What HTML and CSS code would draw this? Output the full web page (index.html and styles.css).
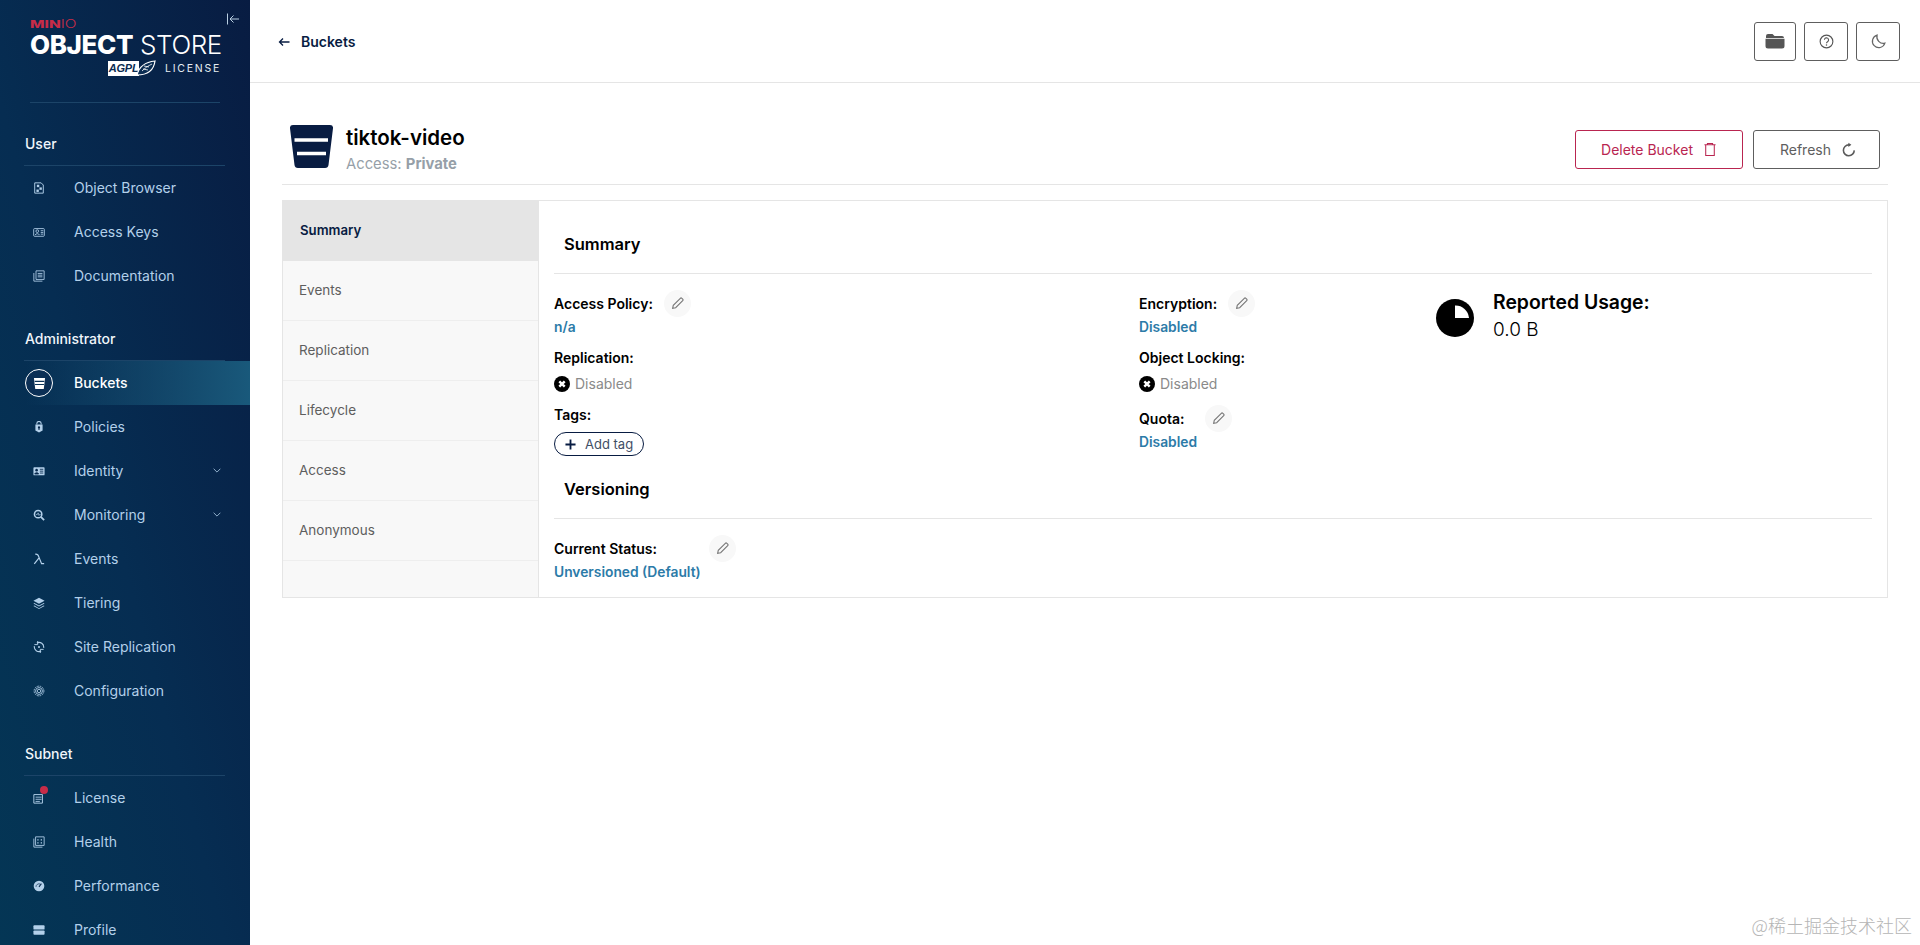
FILE: index.html
```html
<!DOCTYPE html>
<html lang="en">
<head>
<meta charset="utf-8">
<title>MinIO Object Store</title>
<link rel="stylesheet" href="styles.css">
</head>
<body>
<div class="app">
  <aside class="sidebar">
    <div class="logo-area">
      <button class="collapse" aria-label="Collapse"><svg viewBox="0 0 14 14" width="14" height="14"><path d="M1.5 1.5v11M13 7H4M7.5 3.500 4 7l3.500 3.500" fill="none" stroke="#b9cfe2" stroke-width="1"/></svg></button>
      <div class="logo">
        <div class="logo-minio"><b>MIN</b><span>IO</span></div>
        <div class="logo-name"><b>OBJECT</b> <span>STORE</span></div>
        <div class="logo-license">
          <div class="agpl">
            <span class="agpl-text">AGPL</span>
            <svg class="agpl-wing" viewBox="0 0 20 16" width="20" height="16"><path d="M1 15C3 7 9 2 19 1c-1 8-6 14-18 14z" fill="#0a2c52" stroke="#fff" stroke-width="1.200"/><path d="M6 11c3-3 6-5 10-7M8 6l5 1M7 9l5 1" stroke="#fff" stroke-width=".8" fill="none"/></svg>
          </div>
          <span class="license-text">LICENSE</span>
        </div>
      </div>
    </div>

    <div class="nav-title">User</div>
    <a class="nav-item"><span class="nav-icon"><svg viewBox="0 0 14 14"><path d="M2 1h7.500L12 3.500V13H2z" fill="none" stroke="currentColor" stroke-width="1.100"/><rect x="4.500" y="3.200" width="2.800" height="2.800" fill="currentColor"/><rect x="7.500" y="6.300" width="2.800" height="2.800" fill="currentColor"/><rect x="4" y="8.800" width="2.800" height="2.800" fill="currentColor"/></svg></span>Object Browser</a>
    <a class="nav-item"><span class="nav-icon"><svg viewBox="0 0 14 14"><rect x=".8" y="3" width="12.400" height="9" rx="1" fill="none" stroke="currentColor" stroke-width="1"/><circle cx="5" cy="6" r="1.600" fill="none" stroke="currentColor"/><path d="M2.500 10.500c.3-2 4.700-2 5 0M9 5.500h3M9 7.500h3M9 9.500h3" fill="none" stroke="currentColor"/></svg></span>Access Keys</a>
    <a class="nav-item"><span class="nav-icon"><svg viewBox="0 0 14 14"><path d="M3.500 1h9.500v10H3.500z" fill="none" stroke="currentColor"/><path d="M1 3.500V13h10M5.500 4h5.500M5.500 6h5.500M5.500 8h5.500" fill="none" stroke="currentColor"/></svg></span>Documentation</a>

    <div class="nav-title">Administrator</div>
    <a class="nav-item nav-active"><span class="nav-ring"><svg viewBox="0 0 14 14" width="13" height="13"><path d="M1 1h12l-1.400 12H2.400z" fill="#fff"/><path d="M1.800 4.700h10.400M2.200 8h9.600" stroke="#0a3358" stroke-width="1.100"/></svg></span>Buckets</a>
    <a class="nav-item"><span class="nav-icon"><svg viewBox="0 0 14 14"><path d="M4.500 4V3a2.500 2.500 0 0 1 5 0v1" fill="none" stroke="currentColor" stroke-width="1.200"/><path d="M2.800 4h8.400v7L7 13.500 2.800 11z" fill="currentColor"/><circle cx="7" cy="7.500" r="1.300" fill="#07294d"/><rect x="6.400" y="8" width="1.200" height="2.500" fill="#07294d"/></svg></span>Policies</a>
    <a class="nav-item"><span class="nav-icon"><svg viewBox="0 0 14 14"><rect x=".5" y="2.500" width="13" height="9.500" rx="1" fill="currentColor"/><circle cx="4.200" cy="6" r="1.500" fill="#07294d"/><path d="M2 10.500c.3-2 4.200-2 4.500 0zM8 5h4M8 7.200h4M8 9.400h4" fill="#07294d" stroke="#07294d"/></svg></span>Identity<svg class="chev" viewBox="0 0 10 6" width="8" height="5"><path d="M.8.8 5 5 9.200.8" fill="none" stroke="currentColor"/></svg></a>
    <a class="nav-item"><span class="nav-icon"><svg viewBox="0 0 14 14"><circle cx="6" cy="6" r="4.300" fill="none" stroke="currentColor" stroke-width="1.800"/><path d="M9.200 9.200 13 13" stroke="currentColor" stroke-width="2"/><path d="M3.500 6.500h1.500l1-2 1 3 .6-1H9" fill="none" stroke="currentColor" stroke-width=".8"/></svg></span>Monitoring<svg class="chev" viewBox="0 0 10 6" width="8" height="5"><path d="M.8.8 5 5 9.200.8" fill="none" stroke="currentColor"/></svg></a>
    <a class="nav-item"><span class="nav-icon"><svg viewBox="0 0 14 14"><path d="M2.500 1.500c2.500-.5 3.500.5 4.300 3L10 12.500h3M7.300 5.500 1.500 12.800" fill="none" stroke="currentColor" stroke-width="1.400"/></svg></span>Events</a>
    <a class="nav-item"><span class="nav-icon"><svg viewBox="0 0 14 14"><path d="M7 1 13.500 4.500 7 8 .5 4.500z" fill="currentColor"/><path d="M1.500 7 .5 7.500 7 11l6.500-3.500L12.500 7 7 10zM1.500 10 .5 10.500 7 14l6.500-3.500-1-.5L7 13z" fill="currentColor"/></svg></span>Tiering</a>
    <a class="nav-item"><span class="nav-icon"><svg viewBox="0 0 14 14"><path d="M4.500 2.200A5.500 5.500 0 0 1 12.400 8M9.500 11.800A5.500 5.500 0 0 1 1.600 6" fill="none" stroke="currentColor" stroke-width="1.300"/><path d="M5.500 0v4.200H1.600M8.500 14V9.800h3.900" fill="none" stroke="currentColor" stroke-width="1.100"/><circle cx="7" cy="7" r="1.200" fill="currentColor"/></svg></span>Site Replication</a>
    <a class="nav-item"><span class="nav-icon"><svg viewBox="0 0 14 14"><circle cx="7" cy="7" r="2" fill="none" stroke="currentColor"/><circle cx="7" cy="7" r="4" fill="none" stroke="currentColor"/><circle cx="7" cy="7" r="5.700" fill="none" stroke="currentColor" stroke-dasharray="2 1"/></svg></span>Configuration</a>

    <div class="nav-title">Subnet</div>
    <a class="nav-item"><span class="nav-icon"><svg viewBox="0 0 14 14"><path d="M1 3h10v10H1z" fill="none" stroke="currentColor" stroke-width="1.100"/><path d="M3 6h7M3 8.500h7M3 11h5" stroke="currentColor"/></svg><i class="dot"></i></span>License</a>
    <a class="nav-item"><span class="nav-icon"><svg viewBox="0 0 14 14"><path d="M1 3v10h10" fill="none" stroke="currentColor" stroke-width="1"/><path d="M3 1h10v10H3z" fill="none" stroke="currentColor" stroke-width="1"/><path d="M5 4.500h1.500M9 4.500h1.500M5 8h1.500M9 8h1.500" stroke="currentColor" stroke-width="1.500"/></svg></span>Health</a>
    <a class="nav-item"><span class="nav-icon"><svg viewBox="0 0 14 14"><circle cx="7" cy="7" r="6.200" fill="currentColor"/><path d="M7 8 9.800 4.200" stroke="#07294d" stroke-width="1.200"/><path d="M3.500 8a3.500 3.500 0 0 1 5-3.200" fill="none" stroke="#07294d" stroke-width=".8"/></svg></span>Performance</a>
    <a class="nav-item"><span class="nav-icon"><svg viewBox="0 0 14 14"><rect x=".5" y="1.500" width="13" height="5" rx="1" fill="currentColor"/><rect x=".5" y="7.500" width="13" height="5" rx="1" fill="currentColor"/></svg></span>Profile</a>
  </aside>

  <main class="main">
    <header class="topbar">
      <a class="back"><svg viewBox="0 0 12 10" width="12" height="10"><path d="M11.500 5H1.500M5 1.500 1.500 5 5 8.500" fill="none" stroke="#081c42" stroke-width="1.300"/></svg>Buckets</a>
      <div class="top-actions">
        <button class="icon-btn icon-btn-folder" aria-label="Browse"><svg viewBox="0 0 20 16" width="20" height="16"><path d="M1 3a2 2 0 0 1 2-2h4.500L9.500 3H17a2 2 0 0 1 2 2H1z" fill="#555"/><path d="M.5 5.800h19V13a2.500 2.500 0 0 1-2.500 2.500H3A2.500 2.500 0 0 1 .5 13z" fill="#555"/></svg></button>
        <button class="icon-btn" aria-label="Help"><svg viewBox="0 0 16 16" width="15" height="15"><circle cx="8" cy="8" r="6.800" fill="none" stroke="#555" stroke-width="1.200"/><path d="M5.800 6.200a2.200 2.200 0 1 1 3.300 2c-.8.500-1.100.9-1.100 1.700" fill="none" stroke="#555" stroke-width="1.200"/><circle cx="8" cy="11.700" r=".8" fill="#555"/></svg></button>
        <button class="icon-btn" aria-label="Theme"><svg viewBox="0 0 16 16" width="15" height="15"><path d="M6.500 1.200a6.800 6.800 0 1 0 8.300 8.600A7 7 0 0 1 6.500 1.200z" fill="none" stroke="#666" stroke-width="1.300"/></svg></button>
      </div>
    </header>

    <div class="content">
      <section class="bucket-head">
        <svg class="bucket-icon" viewBox="0 0 43 43" width="43" height="43"><path d="M3 0h37a3 3 0 0 1 3 3.300L38.500 40a3.500 3.500 0 0 1-3.500 3H8a3.500 3.500 0 0 1-3.500-3L0 3.300A3 3 0 0 1 3 0z" fill="#081c42"/><path d="M4.500 15h33.500M7 28.500h29" stroke="#fff" stroke-width="3.400"/></svg>
        <div class="bucket-title">
          <h1>tiktok-video</h1>
          <div class="access">Access: <b>Private</b></div>
        </div>
        <div class="head-actions">
          <button class="btn btn-danger">Delete Bucket<svg viewBox="0 0 14 16" width="12" height="15"><path d="M.5 2.500h13M4 2.500V1h6v1.500M2 2.500V15h10V2.500" fill="none" stroke="#b92550" stroke-width="1.200"/></svg></button>
          <button class="btn btn-refresh">Refresh<svg viewBox="0 0 16 16" width="14" height="15"><path d="M14 9a6.200 6.200 0 1 1-6.200-6.300h1.500" fill="none" stroke="#5a5a5a" stroke-width="1.800"/><path d="M7.300.2l3.400 2.500-3.400 2.500z" fill="#5a5a5a"/></svg></button>
        </div>
      </section>

      <section class="panel">
        <nav class="tabs">
          <a class="tab tab-active">Summary</a>
          <a class="tab">Events</a>
          <a class="tab">Replication</a>
          <a class="tab">Lifecycle</a>
          <a class="tab">Access</a>
          <a class="tab">Anonymous</a>
        </nav>
        <div class="detail">
          <h2 class="sec-title sec-first">Summary</h2>
          <div class="summary-grid">
            <div class="col">
              <div class="kv">
                <div class="k">Access Policy:<span class="edit"><svg viewBox="0 0 12 12" width="13" height="13"><path d="M1.500 10.500l.6-2.800L8.600 1.200a1 1 0 0 1 1.400 0l.8.800a1 1 0 0 1 0 1.400L4.300 9.900z" fill="none" stroke="#777" stroke-width="1"/></svg></span></div>
                <div class="v link">n/a</div>
              </div>
              <div class="kv kv-gap">
                <div class="k">Replication:</div>
                <div class="v status"><svg viewBox="0 0 16 16" width="16" height="16"><circle cx="8" cy="8" r="8"/><path d="M5.300 5.300l5.400 5.400M10.700 5.300l-5.400 5.400" stroke="#fff" stroke-width="2.400"/></svg>Disabled</div>
              </div>
              <div class="kv kv-gap">
                <div class="k">Tags:</div>
                <button class="tag-btn"><svg viewBox="0 0 12 12" width="11" height="11"><path d="M6 .5v11M.5 6h11" stroke="#081c42" stroke-width="2"/></svg>Add tag</button>
              </div>
            </div>
            <div class="col">
              <div class="kv">
                <div class="k">Encryption:<span class="edit"><svg viewBox="0 0 12 12" width="13" height="13"><path d="M1.500 10.500l.6-2.800L8.600 1.200a1 1 0 0 1 1.400 0l.8.800a1 1 0 0 1 0 1.400L4.300 9.900z" fill="none" stroke="#777" stroke-width="1"/></svg></span></div>
                <div class="v link">Disabled</div>
              </div>
              <div class="kv kv-gap">
                <div class="k">Object Locking:</div>
                <div class="v status"><svg viewBox="0 0 16 16" width="16" height="16"><circle cx="8" cy="8" r="8"/><path d="M5.300 5.300l5.400 5.400M10.700 5.300l-5.400 5.400" stroke="#fff" stroke-width="2.400"/></svg>Disabled</div>
              </div>
              <div class="kv kv-quota">
                <div class="k">Quota:<span class="edit edit-quota"><svg viewBox="0 0 12 12" width="13" height="13"><path d="M1.500 10.500l.6-2.800L8.600 1.200a1 1 0 0 1 1.400 0l.8.800a1 1 0 0 1 0 1.400L4.300 9.900z" fill="none" stroke="#777" stroke-width="1"/></svg></span></div>
                <div class="v link">Disabled</div>
              </div>
            </div>
            <div class="usage">
              <svg viewBox="0 0 38 38" width="38" height="38"><circle cx="19" cy="19" r="19" fill="#000"/><path d="M19 6.500A13.500 13.500 0 0 1 33 19H19z" fill="#fff"/></svg>
              <div>
                <div class="usage-k">Reported Usage:</div>
                <div class="usage-v">0.0 B</div>
              </div>
            </div>
          </div>
          <h2 class="sec-title sec-second">Versioning</h2>
          <div class="kv kv-version">
            <div class="k">Current Status:<span class="edit edit-version"><svg viewBox="0 0 12 12" width="13" height="13"><path d="M1.500 10.500l.6-2.800L8.600 1.200a1 1 0 0 1 1.400 0l.8.800a1 1 0 0 1 0 1.400L4.300 9.900z" fill="none" stroke="#777" stroke-width="1"/></svg></span></div>
            <div class="v link">Unversioned (Default)</div>
          </div>
        </div>
      </section>
    </div>
  </main>
  <div class="watermark">@稀土掘金技术社区</div>
</div>
</body>
</html>
```
FILE: styles.css
```css
* { box-sizing: border-box; }
html, body { margin: 0; height: 100%; overflow: hidden; }
body { font-family: Inter, "Noto Sans CJK SC", sans-serif; background: #fff; color: #000; }
button { font-family: inherit; cursor: pointer; }
a { display: block; }
.app { display: flex; height: 945px; overflow: hidden; }

.sidebar {
  width: 250px; flex: none; height: 945px; overflow: hidden; color: #b3d0ea;
  background: linear-gradient(75deg, #043655 0%, #062d52 45%, #081c42 100%);
}
.logo-area { position: relative; height: 103px; margin: 0 30px; border-bottom: 1px solid #1c4468; }
.collapse { position: absolute; left: 196px; top: 12px; padding: 0; width: 14px; height: 14px; border: 0; background: none; display: flex; }
.logo { padding-top: 19px; }
.logo-minio { font-size: 11px; line-height: 10px; color: #c72c48; width: 33px; transform: scaleX(1.4); transform-origin: left center; white-space: nowrap; }
.logo-minio b { font-weight: 800; }
.logo-minio span { font-weight: 300; }
.logo-name { margin-top: 4px; font-size: 26px; line-height: 24px; color: #fff; white-space: nowrap; letter-spacing: -.4px; }
.logo-name b { font-weight: 800; }
.logo-name span { font-weight: 300; }
.logo-license { display: flex; justify-content: flex-end; align-items: center; gap: 9px; margin-top: 3px; height: 16px; }
.agpl { display: flex; align-items: center; height: 16px; }
.agpl-text { display: block; width: 31px; height: 15px; background: #fff; color: #0a2c52; font-size: 11px; line-height: 15px; font-weight: 700; font-style: italic; text-align: center; letter-spacing: -.2px; font-family: "Liberation Sans", sans-serif; }
.agpl-wing { display: block; margin-left: -3px; }
.license-text { font-size: 10.500px; letter-spacing: 1.750px; color: #e6edf3; font-weight: 400; margin-right: -1px; }

.nav-title { height: 63px; margin: 0 25px 0 24px; padding: 31px 0 0 1px; font-size: 14px; line-height: 20px; font-weight: 500; color: #f0f5fa; border-bottom: 1px solid #1c4468; }
.nav-item { position: relative; display: flex; align-items: center; height: 44px; font-size: 14px; font-weight: 400; line-height: 20px; color: #b3d0ea; padding-left: 74px; }
.nav-icon { position: absolute; left: 33px; top: 16px; width: 12px; height: 12px; display: block; color: #b3d0ea; }
.nav-icon svg { display: block; width: 12px; height: 12px; }
.nav-ring { position: absolute; left: 25px; top: 8px; width: 28px; height: 28px; border: 1px solid #fff; border-radius: 50%; display: flex; align-items: center; justify-content: center; background: #0b2f55; }
.nav-active { color: #fff; font-weight: 500; background: linear-gradient(90deg, rgba(26,91,126,0) 10%, #19597b 100%); }
.chev { position: absolute; left: 213px; top: 19px; color: #b3d0ea; }
.dot { position: absolute; left: 7px; top: -6px; width: 8px; height: 8px; border-radius: 50%; background: #c72c48; }

.main { flex: 1; min-width: 0; }
.topbar { height: 83px; border-bottom: 1px solid #e5e5e5; display: flex; align-items: center; justify-content: space-between; padding: 0 20px 0 28px; }
.back { display: flex; align-items: center; gap: 11px; font-size: 14px; font-weight: 600; color: #081c42; padding-top: 1px; }
.top-actions { display: flex; gap: 8px; }
.icon-btn { width: 44px; height: 39px; padding: 0; border: 1px solid #5e5e5e; border-radius: 3px; background: #fff; display: flex; align-items: center; justify-content: center; }
.icon-btn-folder { width: 42px; }

.content { padding: 0 32px; }
.bucket-head { height: 102px; margin-bottom: 15px; border-bottom: 1px solid #e5e5e5; display: flex; padding: 42px 8px 0 8px; }
.bucket-icon { flex: none; }
.bucket-title { margin-left: 13px; }
.bucket-title h1 { margin: 0; font-size: 20.500px; line-height: 26px; font-weight: 600; color: #000; }
.access { margin-top: 3px; font-size: 14.800px; line-height: 20px; color: #969fa8; }
.access b { font-weight: 700; }
.head-actions { margin-left: auto; display: flex; gap: 10px; margin-top: 5px; }
.btn { height: 39px; padding: 0 26px; border: 1px solid #5e5e5e; border-radius: 3px; background: #fff; color: #5e5e5e; font-size: 14px; display: flex; align-items: center; gap: 11px; }
.btn-danger { border-color: #b92550; color: #b92550; padding: 0 26px 0 25px; }
.btn-refresh { padding: 0 23px 0 26px; }

.panel { display: flex; height: 398px; border: 1px solid #e5e5e5; }
.tabs { width: 256px; flex: none; background: #f8f8f8; border-right: 1px solid #e5e5e5; }
.tab { height: 60px; line-height: 58px; padding-left: 16px; font-size: 13.500px; color: #5e5e5e; border-bottom: 1px solid #eeeeee; }
.tab-active { background: #e5e5e5; color: #081c42; font-weight: 600; font-size: 13.200px; line-height: 59px; padding-left: 17px; border-bottom: 0; }
.detail { flex: 1; min-width: 0; padding: 0 15px; }
.sec-title { margin: 0; padding-left: 10px; font-size: 16.500px; line-height: 20px; font-weight: 600; color: #000; border-bottom: 1px solid #e5e5e5; }
.sec-first { padding-top: 33px; padding-bottom: 19px; }
.sec-second { margin-top: 23px; padding-top: 0; padding-bottom: 19px; }
.summary-grid { display: grid; grid-template-columns: 585px 297px 1fr; padding-top: 19px; }
.k { display: flex; align-items: center; height: 20px; font-size: 14px; font-weight: 600; color: #000; }
.v { margin-top: 4px; font-size: 14px; line-height: 20px; }
.link { color: #2c7ba8; font-weight: 600; font-size: 13.800px; }
.status { margin-top: 7px; display: flex; align-items: center; gap: 5px; color: #8a8a8a; font-weight: 400; font-size: 14px; }
.kv-gap { margin-top: 10px; }
.kv-quota { margin-top: 14px; }
.kv-version { margin-top: 19px; }
.edit { width: 27px; height: 27px; margin-left: 11px; border-radius: 50%; background: #f8f8f8; display: flex; align-items: center; justify-content: center; flex: none; }
.edit-quota { margin-left: 21px; }
.edit-version { margin-left: 52px; }
.tag-btn { margin-top: 8px; height: 24px; width: 90px; padding: 0 0 0 10px; border: 1px solid #081c42; border-radius: 12px; background: #fff; color: #3f4e66; font-size: 13px; display: flex; align-items: center; gap: 9px; }
.usage { display: flex; align-items: flex-start; gap: 19px; }
.usage svg { margin-top: 6px; }
.usage-k { font-size: 19.400px; line-height: 20px; margin-top: -1px; font-weight: 600; color: #000; }
.usage-v { margin-top: 6px; font-size: 19px; line-height: 24px; font-weight: 300; color: #000; }

.watermark { position: absolute; right: 8px; bottom: 10px; font-size: 18px; line-height: 20px; color: #b5b5b5; font-family: "Noto Sans CJK SC", sans-serif; font-weight: 300; }
```
